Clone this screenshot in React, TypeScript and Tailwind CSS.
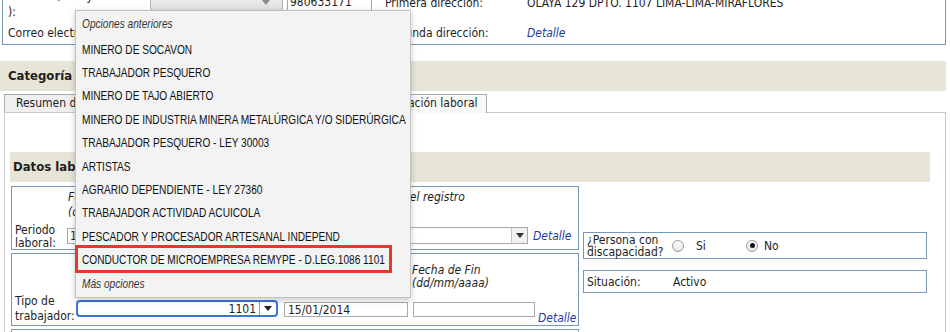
import React from 'react';

const font = "font-['DejaVu_Sans_Condensed','DejaVu_Sans',sans-serif]";
const menuFont = "font-['Liberation_Sans','Arial',sans-serif]";

const options = [
  'MINERO DE SOCAVON',
  'TRABAJADOR PESQUERO',
  'MINERO DE TAJO ABIERTO',
  'MINERO DE INDUSTRIA MINERA METALÚRGICA Y/O SIDERÚRGICA',
  'TRABAJADOR PESQUERO - LEY 30003',
  'ARTISTAS',
  'AGRARIO DEPENDIENTE - LEY 27360',
  'TRABAJADOR ACTIVIDAD ACUICOLA',
  'PESCADOR Y PROCESADOR ARTESANAL INDEPEND',
  'CONDUCTOR DE MICROEMPRESA REMYPE - D.LEG.1086 1101',
];

function Arrow({ className }: { className?: string }) {
  return (
    <svg width="8" height="5" viewBox="0 0 8 5" className={className}>
      <path d="M0 0 L8 0 L4 5 Z" />
    </svg>
  );
}

function Detalle({ className = '' }: { className?: string }) {
  return <span className={`italic text-[#1f3aa5] ${className}`}>Detalle</span>;
}

function Radio({ checked }: { checked?: boolean }) {
  return (
    <span className="flex h-[12px] w-[12px] items-center justify-center rounded-full border border-[#9b9b9b] bg-linear-to-b from-[#ffffff] to-[#e6e6e6]">
      {checked && <span className="h-[5px] w-[5px] rounded-full bg-[#111]" />}
    </span>
  );
}

// menu label, drawn narrow like the native popup
function MenuText({ children, italic }: { children: React.ReactNode; italic?: boolean }) {
  return (
    <span className={`inline-block origin-left scale-x-[0.75] whitespace-nowrap ${italic ? 'italic text-[#333]' : ''}`}>
      {children}
    </span>
  );
}

function TopBox() {
  return (
    <div className="ml-[2px] mt-[-20px] w-[944px] border border-[#7896b8]">
      <div className="flex h-[40px]">
        <div className="w-[147px] whitespace-nowrap pl-[5px] pt-[7px] leading-[16px]">
          Teléfono (cód. y número
          <br />
          ):
        </div>
        <div className="flex w-[225px] items-start gap-[4px] pt-[10px]">
          <div className="relative h-[20px] w-[133px] rounded-[3px] border border-[#b5b5b5] bg-linear-to-b from-[#f4f4f4] to-[#e0e0e0]">
            <Arrow className="absolute right-[12px] top-[8px] fill-[#8a8a8a]" />
          </div>
          <div className="flex h-[22px] w-[85px] items-center border border-[#a9a9a9] pl-[2px]">980633171</div>
        </div>
        <div className="w-[152px] pl-[10px] pt-[15px]">Primera dirección:</div>
        <div className="pt-[15px]">OLAYA 129 DPTO. 1107 LIMA-LIMA-MIRAFLORES</div>
      </div>
      <div className="flex h-[23px] items-center">
        <div className="w-[147px] whitespace-nowrap pl-[5px]">Correo electrónico:</div>
        <div className="w-[225px]">
          <div className="h-[18px] w-[220px] border border-[#a9a9a9]" />
        </div>
        <div className="w-[152px] pl-[10px]">Segunda dirección:</div>
        <Detalle />
      </div>
    </div>
  );
}

function Tabs() {
  return (
    <div className="ml-[4px] mt-[3px] flex h-[19px] items-start gap-[2px]">
      <div className="h-[18px] w-[158px] border border-b-0 border-[#ababab] bg-[#efefef] pl-[11px] leading-[17px]">
        Resumen del trabajador
      </div>
      <div className="h-[18px] w-[161px] border border-b-0 border-[#ababab] bg-[#efefef] text-center leading-[17px]">
        Datos del empleador
      </div>
      <div className="relative z-10 h-[19px] w-[160px] border border-b-0 border-[#ababab] bg-[#f8f8f8] text-center leading-[17px]">
        Datos de situación laboral
      </div>
    </div>
  );
}

function Panel() {
  return (
    <div className="-mt-px ml-[4px] h-[240px] w-[942px] border border-[#c9c9c9] pt-[39px]">
      <div className="ml-[5px] flex h-[30px] w-[920px] items-center bg-[#e6e5d6] pl-[3px] text-[13px] font-bold">
        Datos laborales
      </div>
      <div className="mt-[4px] flex">
        <div className="ml-[6px] w-[568px]">
          {/* Periodo laboral */}
          <div className="flex h-[64px] border border-[#7896b8]">
            <div className="w-[55px] pl-[3px] pt-[37px] leading-[13px]">
              Periodo
              <br />
              laboral:
            </div>
            <div className="flex-1">
              <div className="flex h-[35px] pt-[3px] italic leading-[15px]">
                <div className="w-[125px] pl-[1px]">
                  Fecha de Inicio
                  <br />
                  (dd/mm/aaaa)
                </div>
                <div className="w-[128px]">
                  Fecha de Fin
                  <br />
                  (dd/mm/aaaa)
                </div>
                <div>Motivo de baja del registro</div>
              </div>
              <div className="flex h-[27px] items-center">
                <div className="flex h-[16px] w-[120px] items-center border border-[#a9a9a9] pl-[2px]">15/01/2014</div>
                <div className="ml-[5px] h-[16px] w-[120px] border border-[#a9a9a9]" />
                <div className="relative ml-[8px] h-[17px] w-[208px] border border-[#a9a9a9] bg-white">
                  <div className="absolute right-0 top-0 flex h-[15px] w-[16px] items-center justify-center border-l border-[#c4c4c4] bg-[#f0f0f0]">
                    <Arrow className="fill-[#333]" />
                  </div>
                </div>
                <Detalle className="ml-[5px]" />
              </div>
            </div>
          </div>

          {/* Tipo de trabajador */}
          <div className="mt-[3px] h-[73px] border border-[#7896b8]">
            <div className="flex h-[36px] pt-[10px] italic leading-[13px]">
              <div className="w-[272px]" />
              <div className="w-[128px]">
                Fecha de Inicio
                <br />
                (dd/mm/aaaa)
              </div>
              <div>
                Fecha de Fin
                <br />
                (dd/mm/aaaa)
              </div>
            </div>
            <div className="flex h-[35px] items-start">
              <div className="w-[64px] pl-[3px] pt-[4px] leading-[15px]">
                Tipo de
                <br />
                trabajador:
              </div>
              <div className="mt-[10px] flex h-[17px] w-[202px] items-center justify-end rounded-[4px] border-2 border-[#3a76d6] bg-white">
                <span className="pr-[3px]">1101</span>
                <span className="flex h-[13px] w-[17px] items-center justify-center border-l border-[#9a9a9a]">
                  <Arrow className="fill-[#222]" />
                </span>
              </div>
              <div className="ml-[6px] mt-[12px] flex h-[15px] w-[124px] items-center border border-[#a9a9a9] pl-[3px]">
                15/01/2014
              </div>
              <div className="ml-[5px] mt-[12px] h-[15px] w-[122px] border border-[#a9a9a9]" />
              <Detalle className="ml-[3px] mt-[21px]" />
            </div>
          </div>

          <div className="mt-[3px] h-[40px] border border-[#7896b8]" />
        </div>

        <div className="ml-[4px] w-[344px] pt-[46px]">
          <div className="flex h-[27px] items-center border border-[#7896b8]">
            <div className="w-[88px] pl-[3px] leading-[12px]">
              ¿Persona con
              <br />
              discapacidad?
            </div>
            <div className="flex w-[74px] items-center">
              <Radio />
              <span className="ml-[12px]">Si</span>
            </div>
            <div className="flex items-center">
              <Radio checked />
              <span className="ml-[6px]">No</span>
            </div>
          </div>
          <div className="mt-[11px] flex h-[23px] items-center border border-[#7896b8]">
            <div className="w-[89px] pl-[3px]">Situación:</div>
            <div>Activo</div>
          </div>
        </div>
      </div>
    </div>
  );
}

function Dropdown() {
  return (
    <div
      className={`absolute left-[75px] top-[10px] z-20 h-[288px] w-[336px] border border-[#c2c2c2] bg-[#f3f3f3] pt-[1px] text-[13.5px] text-[#111] shadow-[0_2px_6px_rgba(0,0,0,0.22)] ${menuFont}`}
    >
      <div className="flex h-[24px] items-center pl-[6px]">
        <MenuText italic>Opciones anteriores</MenuText>
      </div>
      <div className="mt-[2px]">
        {options.map((o) => (
          <div key={o} className="flex h-[23.4px] items-center pl-[6px]">
            <MenuText>{o}</MenuText>
          </div>
        ))}
      </div>
      <div className="flex h-[24px] items-center pl-[6px]">
        <MenuText italic>Más opciones</MenuText>
      </div>
      <div className="absolute left-[-1px] top-[234px] h-[28px] w-[317px] border-[3px] border-[#e4392b]" />
    </div>
  );
}

export default function App() {
  return (
    <div className={`relative h-[332px] w-[950px] overflow-hidden bg-white text-[12px] leading-[14px] text-[#1e1e1e] ${font}`}>
      <TopBox />
      <div className="mt-[16px] flex h-[30px] w-[946px] items-center bg-[#e6e5d6] pl-[8px] text-[13px] font-bold">
        Categoría ocupacional
      </div>
      <Tabs />
      <Panel />
      <Dropdown />
    </div>
  );
}
